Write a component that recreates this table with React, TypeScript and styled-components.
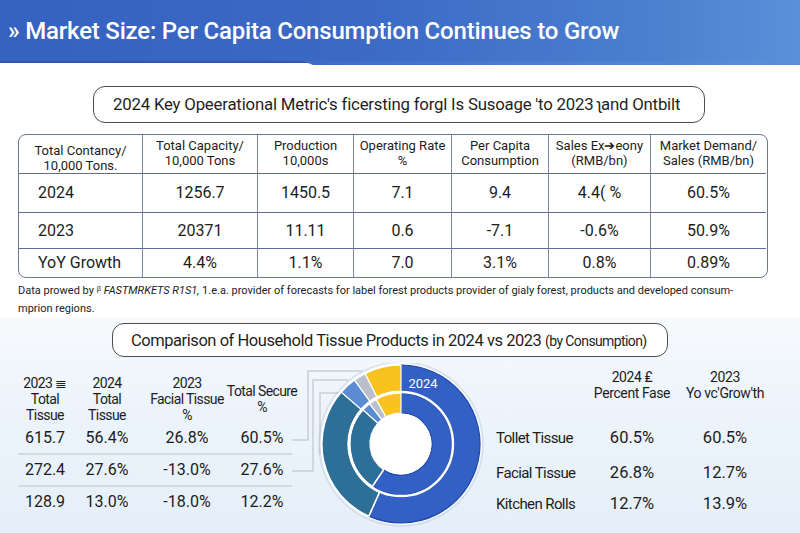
import React from 'react';
import styled, { createGlobalStyle } from 'styled-components';

const GlobalStyle = createGlobalStyle`
  html, body {
    margin: 0;
    padding: 0;
    background: #ffffff;
  }
  body {
    width: 800px;
    height: 533px;
    overflow: hidden;
    font-family: Roboto, "Liberation Sans", Arial, sans-serif;
    color: #1c1c1c;
  }
`;

const Page = styled.div`
  width: 800px;
  height: 533px;
  display: flex;
  flex-direction: column;
  background: #ffffff;
`;

const Header = styled.header`
  position: relative;
  height: 61px;
  flex: none;
  display: flex;
  align-items: center;
  padding-left: 8px;
  background: linear-gradient(90deg, #3562bf 0%, #3b69c4 45%, #4a7fcf 80%, #5a90d9 100%);
  border-bottom: 2px solid #2d57b0;

  &::after {
    content: '';
    position: absolute;
    left: 303px;
    right: 0;
    top: 100%;
    height: 4px;
    background: linear-gradient(90deg, #3d6cc6, #5a90d9);
    clip-path: polygon(0 0, 100% 0, 100% 100%, 10px 100%);
  }
`;

const Title = styled.h1`
  margin: 0;
  font-size: 24px;
  font-weight: 500;
  color: #ffffff;
  letter-spacing: -0.2px;
`;

const Pill = styled.div<{ $left: number; $width: number; $height: number; $top: number }>`
  margin: ${(p) => p.$top}px 0 0 ${(p) => p.$left}px;
  width: ${(p) => p.$width}px;
  height: ${(p) => p.$height}px;
  box-sizing: border-box;
  border: 1px solid #4d4d4d;
  border-radius: 12px;
  background: #ffffff;
  display: flex;
  align-items: center;
  flex: none;
`;

const PillText = styled.span<{ $size: number; $pad: number; $track: number }>`
  padding-left: ${(p) => p.$pad}px;
  font-size: ${(p) => p.$size}px;
  color: #1f1f1f;
  white-space: nowrap;
  letter-spacing: ${(p) => p.$track}px;
`;

const Small = styled.span`
  font-size: 14px;
  letter-spacing: -0.6px;
`;

const MetricTable = styled.div`
  margin: 11px 0 0 18px;
  width: 750px;
  flex: none;
  box-sizing: border-box;
  border: 1.5px solid #6b7891;
  border-radius: 8px;
  overflow: hidden;
  display: grid;
  grid-template-columns: 124px 115px 96px 98px 97px 102px 115px;
  grid-template-rows: 39px 39px 36px 28px;
`;

const Cell = styled.div<{ $head?: boolean; $left?: boolean; $last?: boolean; $bottom?: boolean }>`
  display: flex;
  align-items: center;
  justify-content: ${(p) => (p.$left ? 'flex-start' : 'center')};
  padding-left: ${(p) => (p.$left ? '19px' : '0')};
  text-align: center;
  font-size: ${(p) => (p.$head ? '13px' : '16px')};
  line-height: ${(p) => (p.$head ? '15px' : '18px')};
  color: #1c1c1c;
  border-right: ${(p) => (p.$last ? 'none' : '1.5px solid #7d889c')};
  border-bottom: ${(p) => (p.$bottom ? 'none' : '1.5px solid #5d6f96')};
  white-space: nowrap;
`;

const Footnote = styled.p`
  margin: 4px 0 0 18px;
  width: 740px;
  font-size: 11px;
  line-height: 18px;
  letter-spacing: 0;
  color: #222222;
  flex: none;
`;

const Brand = styled.i`
  letter-spacing: 0;
`;

const Lower = styled.section`
  flex: 1;
  display: flex;
  flex-direction: column;
  background: linear-gradient(180deg, #f7fafd 0%, #edf4fb 40%, #e5eff9 100%);
`;

const LowerRow = styled.div`
  display: flex;
  margin-top: 6px;
`;

const LeftTable = styled.div`
  width: 274px;
  margin-left: 18px;
  padding-top: 12px;
  display: flex;
  flex-direction: column;
`;

const LeftRow = styled.div<{ $line?: boolean; $head?: boolean }>`
  display: grid;
  grid-template-columns: 54px 70px 90px 60px;
  justify-items: center;
  align-items: center;
  height: ${(p) => (p.$head ? '46px' : '30px')};
  border-bottom: ${(p) => (p.$line ? '2px solid #d3d9e1' : '2px solid transparent')};
  font-size: ${(p) => (p.$head ? '14px' : '16px')};
  letter-spacing: ${(p) => (p.$head ? '-0.6px' : '0')};
  line-height: 16px;
  text-align: center;
  white-space: nowrap;
  color: #1c1c1c;
`;

const ChartBox = styled.div`
  width: 193px;
  height: 171px;
  flex: none;
`;

const RightTable = styled.div`
  padding: 6px 0 0 11px;
  display: flex;
  flex-direction: column;
`;

const RightRow = styled.div<{ $h: number; $gap?: number; $head?: boolean }>`
  display: grid;
  grid-template-columns: 94px 84px 102px;
  align-items: center;
  height: ${(p) => p.$h}px;
  margin-top: ${(p) => p.$gap || 0}px;
  font-size: ${(p) => (p.$head ? '14px' : '16.5px')};
  letter-spacing: ${(p) => (p.$head ? '-0.4px' : '0')};
  line-height: 16px;
  white-space: nowrap;
  color: #1c1c1c;
`;

const RightLabel = styled.span`
  font-size: 15px;
  letter-spacing: -0.6px;
`;

const RightValue = styled.span`
  text-align: center;
`;

const metricHead = [
  'Total Contancy/\n10,000 Tons.',
  'Total Capacity/\n10,000 Tons',
  'Production\n10,000s',
  'Operating Rate\n%',
  'Per Capita\nConsumption',
  'Sales Ex\u2794eony\n(RMB/bn)',
  'Market Demand/\nSales (RMB/bn)',
];

const metricRows = [
  ['2024', '1256.7', '1450.5', '7.1', '9.4', '4.4( %', '60.5%'],
  ['2023', '20371', '11.11', '0.6', '-7.1', '-0.6%', '50.9%'],
  ['YoY Growth', '4.4%', '1.1%', '7.0', '3.1%', '0.8%', '0.89%'],
];

const tissueHead = ['2023 \u2263\nTotal\nTissue', '2024\nTotal\nTissue', '2023\nFacial Tissue\n%', 'Total Secure\n%'];
const tissueRows = [
  ['615.7', '56.4%', '26.8%', '60.5%'],
  ['272.4', '27.6%', '-13.0%', '27.6%'],
  ['128.9', '13.0%', '-18.0%', '12.2%'],
];

const shareRows = [
  { label: 'Tollet Tissue', a: '60.5%', b: '60.5%', h: 34, gap: 20 },
  { label: 'Facial Tissue', a: '26.8%', b: '12.7%', h: 36, gap: 0 },
  { label: 'Kitchen Rolls', a: '12.7%', b: '13.9%', h: 26, gap: 0 },
];

const lines = (t: string) =>
  t.split('\n').map((l, i) => (
    <React.Fragment key={i}>
      {i > 0 && <br />}
      {l}
    </React.Fragment>
  ));

function arc(cx: number, cy: number, r0: number, r1: number, a0: number, a1: number) {
  const p = (r: number, a: number) => [cx + r * Math.sin((a * Math.PI) / 180), cy - r * Math.cos((a * Math.PI) / 180)];
  const large = a1 - a0 > 180 ? 1 : 0;
  const [x0, y0] = p(r1, a0);
  const [x1, y1] = p(r1, a1);
  const [x2, y2] = p(r0, a1);
  const [x3, y3] = p(r0, a0);
  return `M${x0} ${y0} A${r1} ${r1} 0 ${large} 1 ${x1} ${y1} L${x2} ${y2} A${r0} ${r0} 0 ${large} 0 ${x3} ${y3} Z`;
}

const BLUE = '#3260c3';
const TEAL = '#2e6f97';
const LIGHT = '#5b8bd2';
const GRAY = '#b9c0cb';
const YELLOW = '#f9c21f';

const outer: [number, number, string][] = [
  [0, 204, BLUE],
  [204, 311, TEAL],
  [311, 324, LIGHT],
  [324, 333, GRAY],
  [333, 360, YELLOW],
];
const inner: [number, number, string][] = [
  [0, 214, BLUE],
  [214, 312, TEAL],
  [312, 322, LIGHT],
  [322, 331, GRAY],
  [331, 360, YELLOW],
];

function Donut() {
  const cx = 109;
  const cy = 81;
  const rad = (a: number) => (a * Math.PI) / 180;
  return (
    <svg width="193" height="171" viewBox="0 0 193 171">
      <g fill="none" stroke="#c9ced6" strokeWidth="1.5">
        <polyline points="0,77 16,77 16,8 70,8" />
        <polyline points="0,108 21,108 21,17 56,17" />
        <polyline points="28,92 28,30 52,30" />
      </g>
      <circle cx={cx} cy={cy} r="82" fill="none" stroke="rgba(170,185,210,0.35)" strokeWidth="1.5" />
      <circle cx={cx} cy={cy} r="80.5" fill="#ffffff" />
      {outer.map(([a0, a1, c], i) => (
        <path
          key={`o${i}`}
          d={arc(cx, cy, 53, 79, a0, a1)}
          fill={c}
          stroke={c === BLUE ? '#1f47af' : '#ffffff'}
          strokeWidth="1.2"
        />
      ))}
      {inner.map(([a0, a1, c], i) => (
        <path
          key={`i${i}`}
          d={arc(cx, cy, 31, 51, a0, a1)}
          fill={c}
          stroke={c === BLUE ? '#1f47af' : '#ffffff'}
          strokeWidth="1.2"
        />
      ))}
      <circle cx={cx} cy={cy} r="52" fill="none" stroke="#ffffff" strokeWidth="2.5" />
      <circle cx={cx} cy={cy} r="30.5" fill="#ffffff" />
      <line
        x1={cx - 52 * Math.sin(rad(24))}
        y1={cy + 52 * Math.cos(rad(24))}
        x2={cx - 79 * Math.sin(rad(24))}
        y2={cy + 79 * Math.cos(rad(24))}
        stroke="#ffffff"
        strokeWidth="1.5"
      />
      <line
        x1={cx - 31 * Math.sin(rad(34))}
        y1={cy + 31 * Math.cos(rad(34))}
        x2={cx - 51 * Math.sin(rad(34))}
        y2={cy + 51 * Math.cos(rad(34))}
        stroke="#ffffff"
        strokeWidth="1.5"
      />
      <text x="131" y="25" fill="#ffffff" fontSize="13" textAnchor="middle" fontFamily="Roboto, sans-serif">
        2024
      </text>
    </svg>
  );
}

export default function App() {
  return (
    <Page>
      <GlobalStyle />
      <Header>
        <Title>{'\u00BB'} Market Size: Per Capita Consumption Continues to Grow</Title>
      </Header>

      <Pill $left={93} $width={612} $height={37} $top={23}>
        <PillText $size={16.8} $pad={19} $track={-0.2}>
          2024 Key Opeerational Metric's ficersting forgl Is Susoage 'to 2023 {'\u0285'}and Ontbilt
        </PillText>
      </Pill>

      <MetricTable>
        {metricHead.map((h, i) => (
          <Cell key={`h${i}`} $head $last={i === metricHead.length - 1}>
            <span style={i === 0 ? { paddingTop: 7 } : { paddingBottom: 2 }}>{lines(h)}</span>
          </Cell>
        ))}
        {metricRows.map((row, r) =>
          row.map((v, i) => (
            <Cell key={`${r}-${i}`} $left={i === 0} $last={i === row.length - 1} $bottom={r === metricRows.length - 1}>
              {v}
            </Cell>
          ))
        )}
      </MetricTable>

      <Footnote>
        Data prowed by {'\u1D5D'} <Brand>FASTMRKETS R1S1,</Brand> 1.e.a. provider of forecasts for label forest products
        provider of gialy forest, products and developed consum-
        <br />
        mprion regions.
      </Footnote>

      <Lower>
        <Pill $left={112} $width={556} $height={34} $top={5}>
          <PillText $size={16.5} $pad={18} $track={-0.45}>
            Comparison of Household Tissue Products in 2024 vs 2023 <Small>(by Consumption)</Small>
          </PillText>
        </Pill>

        <LowerRow>
          <LeftTable>
            <LeftRow $head>
              {tissueHead.map((h, i) => (
                <span key={i}>{lines(h)}</span>
              ))}
            </LeftRow>
            {tissueRows.map((row, r) => (
              <LeftRow key={r} $line={r < tissueRows.length - 1}>
                {row.map((v, i) => (
                  <span key={i}>{v}</span>
                ))}
              </LeftRow>
            ))}
          </LeftTable>

          <ChartBox>
            <Donut />
          </ChartBox>

          <RightTable>
            <RightRow $h={32} $head>
              <span />
              <RightValue>
                2024 {'\u20A4'}
                <br />
                Percent Fase
              </RightValue>
              <RightValue>
                2023
                <br />
                Yo vc'Grow'th
              </RightValue>
            </RightRow>
            {shareRows.map((s) => (
              <RightRow key={s.label} $h={s.h} $gap={s.gap}>
                <RightLabel>{s.label}</RightLabel>
                <RightValue>{s.a}</RightValue>
                <RightValue>{s.b}</RightValue>
              </RightRow>
            ))}
          </RightTable>
        </LowerRow>
      </Lower>
    </Page>
  );
}
